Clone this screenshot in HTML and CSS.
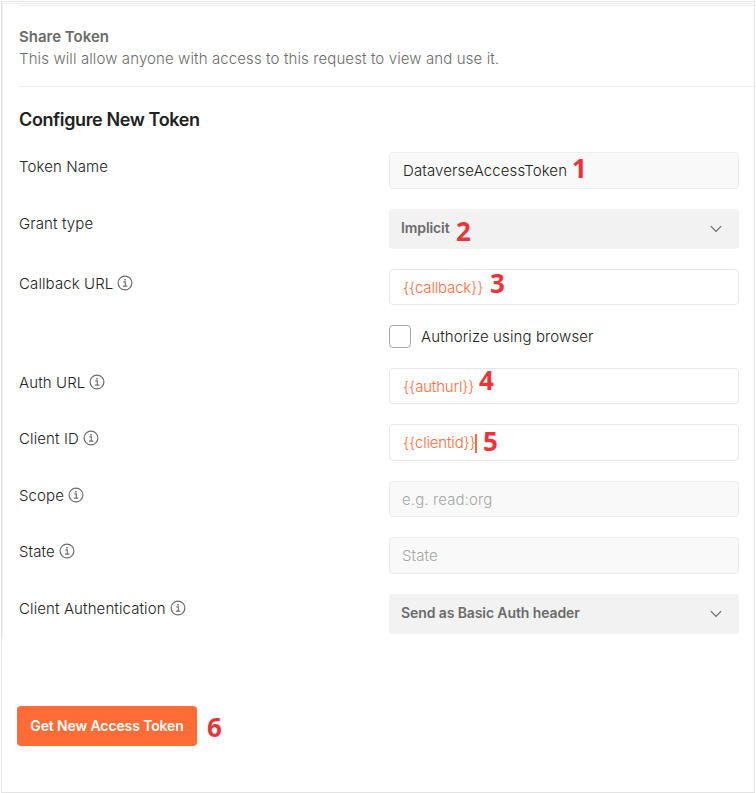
FILE: index.html
```html
<!DOCTYPE html>
<html lang="en">
<head>
<meta charset="utf-8">
<title>Configure New Token</title>
<link rel="stylesheet" href="styles.css">
</head>
<body>
<svg class="defs" width="0" height="0">
  <symbol id="info" viewBox="0 0 16 16"><circle cx="8" cy="8" r="6.9" fill="none" stroke="currentColor" stroke-width="1.2"/><path d="M6.3 6.9h2v4M5.9 11.1h4.4" fill="none" stroke="currentColor" stroke-width="1.1"/><rect x="7.2" y="4" width="1.5" height="1.5" fill="currentColor"/></symbol>
  <symbol id="chevron" viewBox="0 0 12 8"><path d="M.8 1.2 6 6.4l5.2-5.2" fill="none" stroke="currentColor" stroke-width="1.2"/></symbol>
</svg>
<main class="frame">
  <div class="panel">
    <section class="share">
      <h2 class="share-title"><span>Share Token</span></h2>
      <p class="share-text"><span>This will allow anyone with access to this request to view and use it.</span></p>
    </section>
    <h1 class="heading"><span>Configure New Token</span></h1>
    <div class="form">
      <div class="row"><label class="label">Token Name</label>
        <div class="field filled tall"><span class="value">DataverseAccessToken</span><b class="step s1">1</b></div></div>
      <div class="row"><label class="label">Grant type</label>
        <div class="select"><span>Implicit</span><svg class="chevron"><use href="#chevron"/></svg><b class="step s2">2</b></div></div>
      <div class="row"><label class="label">Callback URL<svg class="info"><use href="#info"/></svg></label>
        <div class="field"><span class="value variable">{{callback}}</span><b class="step s3">3</b></div></div>
      <div class="row"><span></span>
        <div class="check"><span class="box"></span><span class="check-text">Authorize using browser</span></div></div>
      <div class="row"><label class="label">Auth URL<svg class="info"><use href="#info"/></svg></label>
        <div class="field"><span class="value variable">{{authurl}}</span><b class="step s4">4</b></div></div>
      <div class="row"><label class="label">Client ID<svg class="info"><use href="#info"/></svg></label>
        <div class="field tall"><span class="value variable">{{clientid}}</span><i class="caret"></i><b class="step s5">5</b></div></div>
      <div class="row"><label class="label">Scope<svg class="info"><use href="#info"/></svg></label>
        <div class="field filled"><span class="placeholder">e.g. read:org</span></div></div>
      <div class="row"><label class="label">State<svg class="info"><use href="#info"/></svg></label>
        <div class="field filled tall"><span class="placeholder">State</span></div></div>
      <div class="row"><label class="label">Client Authentication<svg class="info"><use href="#info"/></svg></label>
        <div class="select"><span class="auth">Send as Basic Auth header</span><svg class="chevron"><use href="#chevron"/></svg></div></div>
    </div>
  </div>
  <div class="actions"><button class="submit">Get New Access Token</button><b class="step s6">6</b></div>
</main>
</body>
</html>
```
FILE: styles.css
```css
* { box-sizing: border-box; }
body { margin: 0; background: #fff; color: #212121; font: 365 15px/22px Inter, sans-serif; letter-spacing: 0.11px; }
.defs { display: block; position: absolute; }
.frame { margin: 1px 0 0 1px; width: 754px; height: 792px; border: 1px solid #e3e3e3; }
.panel { margin-top: 1px; height: 635px; border-left: 1px solid #ededed; border-top: 1px solid #ededed; padding: 1px 0 0 16px; }
.share { height: 82px; padding-top: 20px; border-top: 1px solid #ededed; border-bottom: 1px solid #ededed; color: #6b6b6b; }
.share-title { margin: 0; font-size: 15px; font-weight: 600; letter-spacing: 0; }
.share-text { margin: 0; }
.heading { margin: 21px 0 20px; font-size: 18px; line-height: 24px; font-weight: 560; letter-spacing: -0.38px; }
.form { display: flex; flex-direction: column; gap: 20px; }
.row { display: grid; grid-template-columns: 370px 350px; align-items: start; }
.label { display: flex; align-items: center; height: 30px; margin-bottom: -10px; }
.info { width: 16px; height: 16px; margin: -2px 0 0 4px; color: #6b6b6b; }
.field, .select { position: relative; display: flex; align-items: center; border-radius: 4px; }
.field { height: 36px; padding: 1px 13px 0; border: 1px solid #e6e6e6; }
.tall { height: 37px; }
.filled { background: #f9f9f9; border-color: #ededed; }
.variable { color: #ff6c37; letter-spacing: -0.17px; }
.placeholder { color: #a6a6a6; margin-left: -1px; }
.select { height: 40px; padding: 0 17px 2px 12px; justify-content: space-between; background: #f2f2f2; color: #6b6b6b; font-size: 14px; font-weight: 600; letter-spacing: -0.1px; }
.chevron { width: 12px; height: 8px; margin-top: 2px; }
.caret { width: 2px; height: 19px; background: #ff6c37; margin-left: -1px; }
.check { display: flex; align-items: center; height: 23px; }
.box { width: 22px; height: 23px; border: 1px solid #a6a6a6; border-radius: 4px; margin-right: 10px; }
.actions { display: flex; align-items: center; margin: 68px 0 0 15px; }
.submit { width: 180px; height: 40px; padding: 0; border: 0; border-radius: 4px; background: #ff6c37; color: #fff; font: 600 14px/20px Inter, sans-serif; letter-spacing: -0.12px; }
.step { color: #ee3338; font: 700 26px/30px "Noto Sans", sans-serif; }
.field .step, .select .step { position: absolute; }
.s1 { left: 182px; top: 0; }
.s2 { left: 67px; top: 7px; }
.s3 { left: 100px; top: -2px; }
.s4 { left: 89px; top: -4px; }
.s5 { left: 93px; top: 1px; }
.s6 { margin: 2px 0 0 10px; }
```
